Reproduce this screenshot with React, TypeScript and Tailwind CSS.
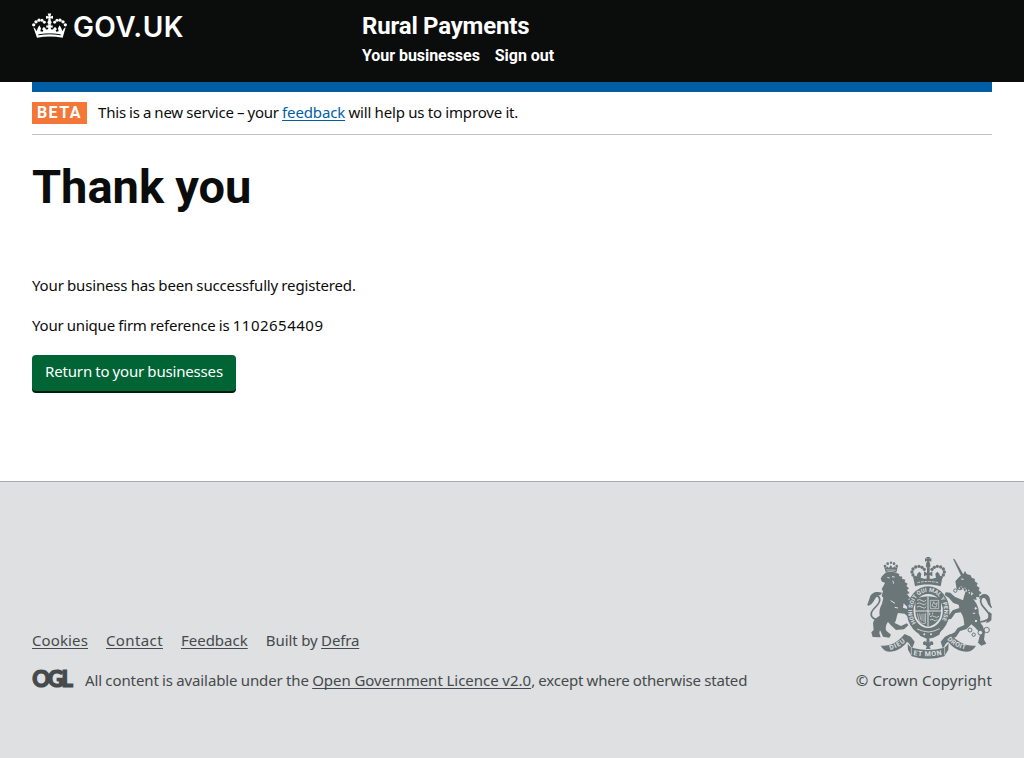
import type { ReactNode } from "react";

function Crown() {
  const beads = [
    [29, 38, 5], [36, 29, 5], [45, 24, 5], [54, 24, 4.6], [61, 30, 4.4],
    [92, 30, 4.4], [99, 24, 4.6], [108, 24, 5], [117, 29, 5], [124, 38, 5],
  ];
  return (
    <svg viewBox="24 0 105 80" className="h-[27px] w-[35px] shrink-0" fill="#fff" aria-hidden="true">
      {beads.map(([x, y, r], i) => (
        <circle key={i} cx={x} cy={y} r={r} />
      ))}
      <path d="M74 13 71 4h11l-3 9 8-2v9l-8-2 2 8h-9l2-8-8 2v-9z" />
      <circle cx="76.5" cy="30" r="6" />
      <path d="M28 45c5 2 7 6 10 12l3-9 5-9 5 9-2 9 7 2 2-5-4-3 4-6 5 1 3 6 6-1 1-5-6 1v-8l6 2-2-5h11l-2 5 6-2v8l-6-1 1 5 6 1 3-6 5-1 4 6-4 3 2 5 7-2-2-9 5-9 5 9 3 9c3-6 5-10 10-12l-9 32c-26-5-51-5-77 0z" />
      <path d="M43 68c22-4 45-4 67 0" fill="none" stroke="#0b0c0c" strokeWidth="3" />
    </svg>
  );
}

function OglLogo() {
  return (
    <svg viewBox="0 0 41 18" className="h-[18px] w-[41px] shrink-0 overflow-visible" role="img" aria-label="OGL">
      <text
        x="0.3"
        y="16.6"
        textLength="40.6"
        lengthAdjust="spacing"
        className="fill-[#454a4c] stroke-[#454a4c] font-['Lato',sans-serif] text-[22px] font-black"
        strokeWidth="1.2"
      >
        OGL
      </text>
    </svg>
  );
}

const bg = "#dee0e2";
const ink = "#6b7679";

function CoatOfArms() {
  const arch = [
    [166, 82], [159, 75], [156, 66], [159, 57], [167, 51], [177, 49], [186, 52], [193, 58],
    [243, 82], [250, 75], [253, 66], [250, 57], [242, 51], [232, 49], [223, 52], [216, 58],
  ];
  const chain = [
    [330, 240, 6], [341, 254, 5], [361, 248, 7], [380, 240, 8], [347, 175, 5], [348, 213, 5], [342, 190, 4], [286, 122, 5],
  ];
  return (
    <svg viewBox="21 21 375 306" className="h-[102px] w-[125px] overflow-visible" fill={ink} aria-hidden="true">
      <defs>
        <path id="garter" d="M168 219A48 57 0 1 1 241 219" />
        <path id="dieu" d="M91 300Q120 292 143 268" />
        <path id="mon" d="M160 315Q203 323 248 314" />
        <path id="droit" d="M261 268Q284 294 322 299" />
      </defs>

      {/* lion */}
      <path d="M77 66 72 49l6 4 3-4 6 5 5-9 6 9 6-5 3 4 6-3-4 18c-11-5-22-5-32-2z" />
      <circle cx="93" cy="38" r="3.5" />
      <circle cx="75" cy="48" r="4" />
      <circle cx="83" cy="41" r="4" />
      <circle cx="102" cy="41" r="4" />
      <circle cx="110" cy="48" r="4" />
      <path d="m79 59 28 2" stroke={bg} strokeWidth="2" />
      <path d="M78 67c10-3 22-3 31 2l9 3-1 6 10 2-1 6 10 3-2 7 9 5-4 7 8 7-6 5 8 10-8 2 10 13-7 3 12 8 7 11-7 10-12-4-13-13-2 13 20 6 14 10-1 12-15 2-13-12-20-2c-5 10-4 22-10 30l19 9 18-8 4 6-13 12-24 2-16-15-8-9c-5 6-9 17-5 26l14 12-5 9-19-3-9-20-2 9 4 13-24-1-4-14 7-7-2-21c2-10 10-17 20-22-2-14 0-24 7-36l4-17-5-7 4-13-4-7 7-12 3-7-9-3-4-9 4-7z" />
      <path d="M82 82 89 84M96 80l8 1M98 92q4 5 2 9M92 152l13 8M104 172l10 2" fill="none" stroke={bg} strokeWidth="3" />
      <path d="M62 212C44 209 31 203 34 189c3-15 28-24 25-42-2-12-17-14-25-4-6 8-7 15-10 23" fill="none" stroke={ink} strokeWidth="5" />
      <path d="M66 128c-14-5-33-3-37 16-2 10 2 15-5 23 14-2 17-17 26-27 5-5 14-4 16-12z" />

      {/* unicorn */}
      <path d="m279 26 5 2 30 52-9 2z" />
      <path d="m286 94 12-14 12-8 5-9 5 9 12 4 3 7 10 4-1 7 9 6-3 7 9 7-3 7 9 8-8 5 3 8-12-1 2 9-10-2c10 12 18 27 16 42l5 14c-2 10 0 16 7 23l7 19-3 23 7 12-15 6-10-9 7-28-15-17-12-10-14 14-20 6-12 18-14 5-7-10 17-9 9-13 20-9c-1-14-3-28-11-38l-16 2-12 17-15 4-5-9 14-7 10-13 20-7-2-10-16-5-13-15-13-9 3-8 14 1 13 12 25 11c2-9 5-18 8-27l-1-6-17 3-9-5z" />
      <path d="M296 112q22 2 41 22" fill="none" stroke={bg} strokeWidth="8" />
      <path d="m291 119 7-13 5 11 7-9 4 13 8-8 1 14 10-6-2 15" fill="none" stroke={ink} strokeWidth="4" />
      <path d="m303 87 8 1" fill="none" stroke={bg} strokeWidth="3" />
      <path d="M360 216c18-2 32-8 27-23-4-13-27-25-25-42 1-12 17-14 23-3 5 9 1 19 10 25" fill="none" stroke={ink} strokeWidth="5" />
      <path d="M357 147c2-17 26-22 32-3 3 10 0 19 6 27-14-3-11-16-19-25-6-6-14-3-19 1zM387 185l8 6-1 20-8 6-9 2 8-13z" />

      {/* royal crown */}
      <path d="m202 27-4-6h13l-4 6 7-3v11l-7-3 4 10h-13l4-10-7 3V24z" />
      <circle cx="204.5" cy="47" r="7" />
      {arch.map(([x, y], i) => (
        <circle key={i} cx={x} cy={y} r="5" />
      ))}
      <path d="M201 53h8v16l8-5v15l-8-4v12h-9V75l-8 4V64l9 5zM169 82l3-11 6-6 6 6-2 12 11 3h24l11-3-2-12 6-6 6 6 3 11 7-3-6 30c-26-7-54-7-77 0l-6-30z" />
      <path d="M172 98q32-7 64 0" fill="none" stroke={bg} strokeWidth="2.5" strokeDasharray="8 3" />

      {/* garter and shield */}
      <ellipse cx="204.5" cy="184" rx="64" ry="75" />
      <ellipse cx="204.5" cy="183" rx="44" ry="51" fill={bg} />
      <text className="font-['Roboto',sans-serif] text-[17px] font-bold" fill={bg}>
        <textPath href="#garter" textLength="234" lengthAdjust="spacing">HONI SOIT QUI MAL Y PENSE</textPath>
      </text>
      <path d="M166 147q38-16 77 0v36c0 27-16 40-39 48-23-8-38-21-38-48z" />
      <path d="M204 139v92M165 183h79" stroke={bg} strokeWidth="3" />
      <path d="M171 151q8-5 15 1t13-2M171 161q8-5 15 1t13-2M171 171q8-5 15 1t13-2M210 200q7-5 13 0t14-1M210 210q6-5 11 0t11-1M209 188v8M218 188v5" fill="none" stroke={bg} strokeWidth="2.4" />
      <path d="M211 151h25v25h-25zM216 168l5-13 4 8 7-5-4 14zM172 190l5 22 10 9 9-1 1-31M179 191l3 18M186 191v22M192 191v25" fill="none" stroke={bg} strokeWidth="2" />
      <path d="m165 235 20 3 20 4 21-4 20-5-8 21-18 9-18 4-21-9z" />
      <path d="m171 237 17 6 17 3 17-3 17-7" fill="none" stroke={bg} strokeWidth="2.5" />
      <circle cx="193" cy="253" r="3" fill={bg} />
      <circle cx="213" cy="253" r="3" fill={bg} />

      {/* motto scroll */}
      <path d="M62 287c28 3 52-11 72-35l18 8 12 15-7 19c-8-4-6-15-16-18-14 18-31 29-53 29-13-1-20-8-26-18z" />
      <path d="M348 287c-28 3-55-11-77-35l-16 8-13 15 6 19c8-4 6-15 17-18 14 18 33 29 56 29 13-1 21-8 27-18z" />
      <path d="M143 281c5 6 7 11 16 13 30 8 60 8 91 0 7-2 10-7 16-14l-1 19-12 20c-32 10-66 10-98 0l-11-20z" />
      <path d="M154 292v23M254 292v23" stroke={bg} strokeWidth="2" />
      <g fill={bg} className="font-['Roboto',sans-serif] font-bold">
        <text className="text-[20px]"><textPath href="#dieu" textLength="52" lengthAdjust="spacing">DIEU</textPath></text>
        <text className="text-[21px]"><textPath href="#mon" textLength="86" lengthAdjust="spacing">ET MON</textPath></text>
        <text className="text-[20px]"><textPath href="#droit" textLength="64" lengthAdjust="spacing">DROIT</textPath></text>
      </g>
      <ellipse cx="204" cy="281" rx="20" ry="14" fill={bg} />
      <path d="M204 262c6 6 6 12 2 18 4-7 12-9 14-1 1 5-3 8-8 5v5h-4l4 8h-15l4-8h-4v-5c-5 3-9 0-8-5 2-8 10-6 13 1-4-6-4-12 2-18z" />
      {chain.map(([x, y, r], i) => (
        <circle key={i} cx={x} cy={y} r={r} fill={bg} stroke={ink} strokeWidth="3" />
      ))}
    </svg>
  );
}

function Link({ className = "", children }: { className?: string; children: ReactNode }) {
  return (
    <a href="#" className={`underline decoration-1 underline-offset-2 [text-decoration-skip-ink:none] ${className}`}>
      {children}
    </a>
  );
}

export default function App() {
  return (
    <div className="flex min-h-[758px] flex-col bg-white font-['Noto_Sans',sans-serif] text-[15px] leading-5 text-[#0b0c0c]">
      <header className="flex h-[82px] bg-[#0b0c0c] px-8 text-white">
        <a href="#" className="flex w-[330px] items-start gap-1.5 pt-3">
          <Crown />
          <span className="pt-px font-['Inter',sans-serif] text-[28px] leading-7 font-semibold tracking-[0.4px]">GOV.UK</span>
        </a>
        <div className="pt-3 font-['Roboto',sans-serif] text-base leading-5 font-bold">
          <div className="text-2xl leading-7 tracking-[-0.15px] [word-spacing:-0.5px]">Rural Payments</div>
          <nav className="flex gap-[15px] pt-1.5 tracking-[-0.05px]">
            <a href="#">Your businesses</a>
            <a href="#">Sign out</a>
          </nav>
        </div>
      </header>

      <main className="flex-1 px-8">
        <div className="h-2.5 bg-[#005ea5]" />
        <div className="flex h-[43px] items-start gap-[11px] border-b border-[#bfc1c3] pt-2.5">
          <strong className="h-[22px] w-[55px] bg-[#f47738] pt-px pl-[5px] font-['Roboto',sans-serif] text-base leading-5 font-bold tracking-[1.4px] text-white">BETA</strong>
          <p className="whitespace-pre">
            <span className="tracking-[-0.2px] [word-spacing:-0.5px]">This is a new service – your </span>
            <Link className="tracking-[-0.14px] text-[#005ea5]">feedback</Link>
            <span className="tracking-[-0.15px] [word-spacing:-0.4px]"> will help us to improve it.</span>
          </p>
        </div>

        <h1 className="pt-[27px] font-['Roboto',sans-serif] text-[47px] leading-[50px] font-bold [word-spacing:-0.5px]">Thank you</h1>
        <p className="pt-[63px] tracking-[-0.15px] [word-spacing:-0.5px]">Your business has been successfully registered.</p>
        <p className="pt-5 tracking-[-0.2px] [word-spacing:-0.4px]">
          Your unique firm reference is <span className="tracking-[0.5px]">1102654409</span>
        </p>
        <a
          href="#"
          className="mt-5 flex h-9 w-[204px] justify-center rounded bg-[#006435] pt-1.5 tracking-[-0.17px] text-white shadow-[0_2px_0_#001e10] [word-spacing:-0.5px]"
        >
          Return to your businesses
        </a>
      </main>

      <footer className="flex h-[277px] justify-between border-t border-[#a1acb2] bg-[#dee0e2] px-8 text-[#454a4c]">
        <div className="pt-[148px]">
          <ul className="flex gap-[18px]">
            <li><Link className="tracking-[0.12px]">Cookies</Link></li>
            <li><Link className="tracking-[0.38px]">Contact</Link></li>
            <li><Link>Feedback</Link></li>
            <li className="tracking-[-0.04px] [word-spacing:-0.4px]">Built by <Link className="tracking-[-0.15px]">Defra</Link></li>
          </ul>
          <div className="flex gap-3 pt-5">
            <OglLogo />
            <p>
              <span className="tracking-[-0.1px] [word-spacing:-0.5px]">All content is available under the </span>
              <Link className="[word-spacing:-0.3px]">Open Government Licence v2.0</Link>
              <span className="tracking-[-0.18px] [word-spacing:-0.45px]">, except where otherwise stated</span>
            </p>
          </div>
        </div>
        <div className="flex flex-col items-end pt-[75px]">
          <CoatOfArms />
          <p className="pt-[11px] tracking-[0.09px]">© Crown Copyright</p>
        </div>
      </footer>
    </div>
  );
}
